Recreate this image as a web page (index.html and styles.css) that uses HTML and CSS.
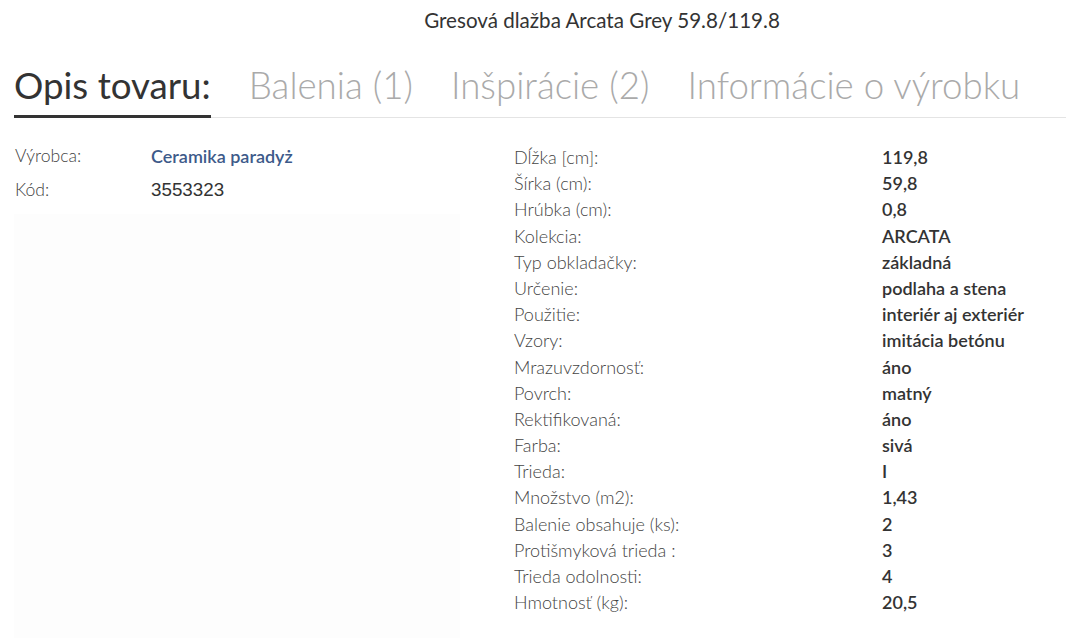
FILE: index.html
```html
<!DOCTYPE html>
<html lang="sk">
<head>
<meta charset="utf-8">
<link rel="stylesheet" href="styles.css">
</head>
<body>
<div class="page">
  <h1 class="title">Gresová dlažba Arcata Grey 59.8/119.8</h1>
  <nav class="tabs">
    <span class="tab active">Opis tovaru:</span>
    <span class="tab">Balenia (1)</span>
    <span class="tab">Inšpirácie (2)</span>
    <span class="tab">Informácie o výrobku</span>
  </nav>
  <div class="content">
    <div class="left">
      <div class="lrow"><span class="llabel">Výrobca:</span><span class="lval brand">Ceramika paradyż</span></div>
      <div class="lrow"><span class="llabel">Kód:</span><span class="lval code">3553323</span></div>
      <div class="image"></div>
    </div>
    <div class="right">
      <div class="row"><span class="label">Dĺžka [cm]:</span><span class="val">119,8</span></div>
      <div class="row"><span class="label">Šírka (cm):</span><span class="val">59,8</span></div>
      <div class="row"><span class="label">Hrúbka (cm):</span><span class="val">0,8</span></div>
      <div class="row"><span class="label">Kolekcia:</span><span class="val">ARCATA</span></div>
      <div class="row"><span class="label">Typ obkladačky:</span><span class="val">základná</span></div>
      <div class="row"><span class="label">Určenie:</span><span class="val">podlaha a stena</span></div>
      <div class="row"><span class="label">Použitie:</span><span class="val">interiér aj exteriér</span></div>
      <div class="row"><span class="label">Vzory:</span><span class="val">imitácia betónu</span></div>
      <div class="row"><span class="label">Mrazuvzdornosť:</span><span class="val">áno</span></div>
      <div class="row"><span class="label">Povrch:</span><span class="val">matný</span></div>
      <div class="row"><span class="label">Rektifikovaná:</span><span class="val">áno</span></div>
      <div class="row"><span class="label">Farba:</span><span class="val">sivá</span></div>
      <div class="row"><span class="label">Trieda:</span><span class="val">I</span></div>
      <div class="row"><span class="label">Množstvo (m2):</span><span class="val">1,43</span></div>
      <div class="row"><span class="label">Balenie obsahuje (ks):</span><span class="val">2</span></div>
      <div class="row"><span class="label">Protišmyková trieda :</span><span class="val">3</span></div>
      <div class="row"><span class="label">Trieda odolnosti:</span><span class="val">4</span></div>
      <div class="row"><span class="label">Hmotnosť (kg):</span><span class="val">20,5</span></div>
    </div>
  </div>
</div>
</body>
</html>
```
FILE: styles.css
```css
html, body {
  margin: 0;
  padding: 0;
  background: #fff;
}
body {
  font-family: Lato, "Open Sans", sans-serif;
  color: #333;
}
.page {
  width: 1066px;
  height: 644px;
  overflow: hidden;
}
.title {
  margin: 0;
  padding: 9px 0 0 138px;
  text-align: center;
  font-size: 20.6px;
  font-weight: 400;
  line-height: 22px;
  color: #333;
}
.tabs {
  display: flex;
  gap: 38px;
  margin: 32px 0 0 14px;
  border-bottom: 1px solid #e4e4e4;
}
.tab {
  font-size: 36.7px;
  font-weight: 300;
  line-height: 44px;
  color: #aaa;
  padding-bottom: 10px;
  white-space: nowrap;
}
.tab.active {
  font-weight: 400;
  color: #333;
  border-bottom: 3px solid #333;
  margin-bottom: -1px;
  padding-bottom: 8px;
}
.content {
  display: flex;
  padding: 26px 0 0 15px;
}
.left {
  width: 499px;
  flex: none;
}
.lrow {
  display: flex;
  height: 34px;
  line-height: 24px;
  font-size: 17.6px;
}
.llabel {
  width: 136px;
  flex: none;
  font-weight: 300;
  color: #444;
}
.brand {
  color: #3d5a8a;
  font-weight: 600;
  font-size: 18px;
}
.code {
  font-family: "Liberation Sans", Arial, sans-serif;
  font-weight: 400;
  font-size: 18.8px;
  color: #333;
}
.image {
  margin: 2px 0 0 -1px;
  width: 446px;
  height: 424px;
  background: #fdfdfd;
}
.right {
  flex: 1;
}
.row {
  display: flex;
  height: 26.2px;
  line-height: 26px;
  font-size: 18px;
}
.label {
  width: 368px;
  flex: none;
  font-weight: 300;
  font-size: 18px;
  color: #444;
}
.val {
  font-weight: 600;
  color: #333;
}
```
